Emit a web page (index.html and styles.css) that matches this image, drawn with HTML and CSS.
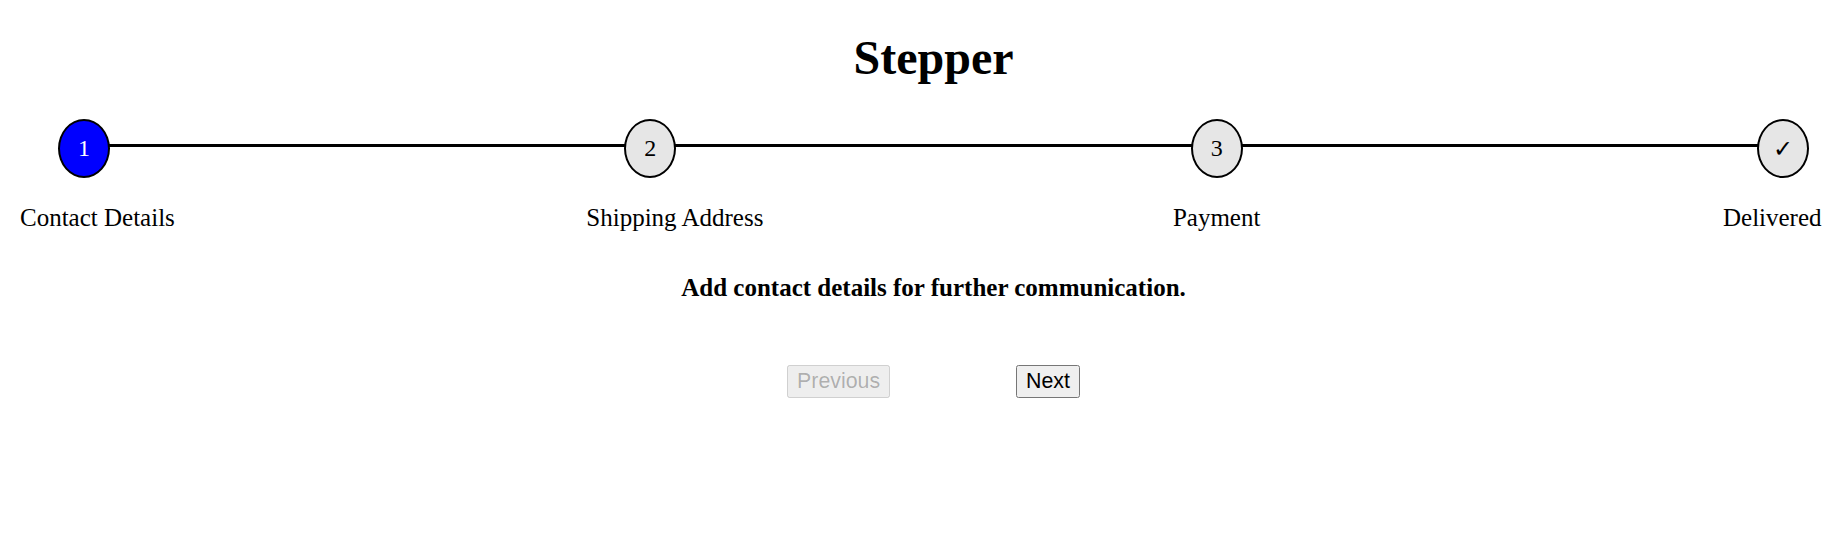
FILE: index.html
```html
<!DOCTYPE html>
<html>
<head>
  <title>Stepper</title>
  <link rel="stylesheet" href="styles.css">
</head>
<body>
  <div class="container">
    <h1>Stepper</h1>

    <div class="stepper">
      <div class="stepper-line"></div>
      <div class="step active">
        <div class="step-number">1</div>
        <div class="step-name">Contact Details</div>
      </div>
      <div class="step">
        <div class="step-number">2</div>
        <div class="step-name">Shipping Address</div>
      </div>
      <div class="step">
        <div class="step-number">3</div>
        <div class="step-name">Payment</div>
      </div>
      <div class="step">
        <div class="step-number">&#10003;</div>
        <div class="step-name">Delivered</div>
      </div>
    </div>

    <div class="step-content" id="step-content">Add contact details for further communication.</div>

    <div class="actions">
      <button id="prev-btn" onclick="goPrev()" disabled>Previous</button>
      <button id="next-btn" onclick="goNext()">Next</button>
    </div>
  </div>

  <script>
    // step texts
    const contents = [
      "Add contact details for further communication.",
      "Add shipping address for successful delivery.",
      "Complete payment to complete the order.",
      "Ready to get delivered!"
    ];
    let current = 0;
    const steps = document.querySelectorAll(".step");
    const content = document.getElementById("step-content");
    const prevBtn = document.getElementById("prev-btn");
    const nextBtn = document.getElementById("next-btn");

    function render() {
      steps.forEach((step, i) => step.classList.toggle("active", i === current));
      content.textContent = contents[current];
      prevBtn.disabled = current === 0;
      nextBtn.disabled = current === steps.length - 1;
    }

    function goPrev() {
      if (current > 0) current--;
      render();
    }

    function goNext() {
      if (current < steps.length - 1) current++;
      render();
    }
  </script>
</body>
</html>
```

FILE: styles.css
```css
body {
  margin: 8px;
  font-family: "Liberation Serif", "Times New Roman", serif;
  overflow-x: hidden;
}

.container {
  width: 100%;
  padding: 12px;
}

h1 {
  margin: 10px 0 34px;
  font-size: 48px;
  text-align: center;
}

/* stepper */
.stepper {
  position: relative;
  display: flex;
  justify-content: space-between;
}

.stepper-line {
  position: absolute;
  top: 25px;
  left: 64px;
  right: 64px;
  height: 3px;
  background-color: black;
}

.step {
  flex: none;
  width: 128px;
  display: flex;
  flex-direction: column;
  align-items: center;
  font-size: 25px;
  white-space: nowrap;
}

.step-number {
  position: relative;
  width: 48px;
  height: 55px;
  border: 2px solid black;
  border-radius: 50%;
  background-color: #e6e6e6;
  display: flex;
  align-items: center;
  justify-content: center;
  font-size: 24px;
}

.step.active .step-number {
  background-color: blue;
  color: white;
}

.step-name {
  align-self: stretch;
  margin-top: 26px;
  text-align: center;
}

.step:last-child .step-name {
  text-align: left;
  padding-left: 4px;
}

.step-content {
  margin-top: 42px;
  font-size: 25px;
  font-weight: bold;
  text-align: center;
}

/* buttons */
.actions {
  display: flex;
  justify-content: center;
  gap: 126px;
  margin-top: 63px;
}

.actions button {
  font-family: "Liberation Sans", Arial, sans-serif;
  font-size: 21.33px;
  padding: 2px 8px;
}
```
